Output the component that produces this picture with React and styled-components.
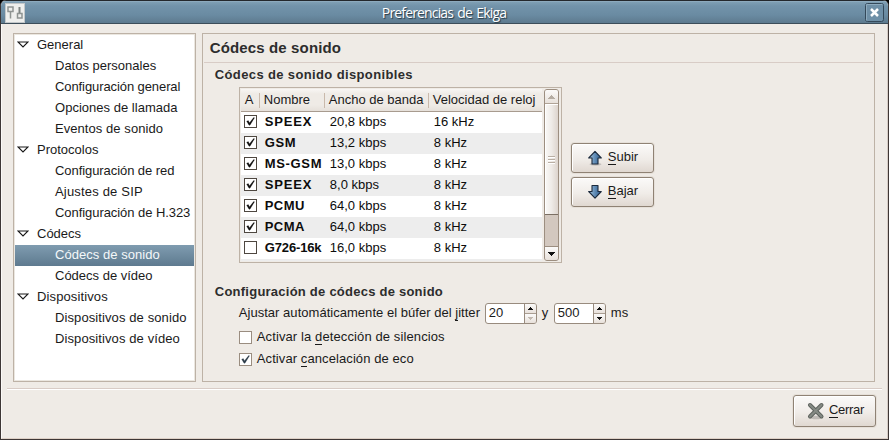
import React from "react";
import styled, { createGlobalStyle, css } from "styled-components";

const Global = createGlobalStyle`
  * { box-sizing: border-box; }
  html, body { margin: 0; padding: 0; background: #000; }
  body { font: 13px/19px "Liberation Sans", Arial, sans-serif; color: #1a1a1a; overflow: hidden; }
`;

const Window = styled.div`
  width: 889px;
  height: 440px;
  display: flex;
  flex-direction: column;
  background: #efebe6;
  border-radius: 6px 6px 0 0;
  overflow: hidden;
  border: 1px solid #3d3635;
  border-top: 0;
`;

const TitleBar = styled.header`
  height: 24px;
  flex: none;
  display: flex;
  align-items: flex-start;
  padding: 3px 3px 0 4px;
  border-top: 1px solid #24282c;
  border-bottom: 1px solid #3c4d59;
  background: linear-gradient(#9ab5c7 0, #7f9fb4 1px, #7293aa 5px, #6a8ba2 14px, #5d7a8e 22px);
`;

const TitleIcon = styled.svg`
  width: 20px;
  height: 20px;
  margin-top: -1px;
  flex: none;
`;

const WindowTitle = styled.h1`
  flex: 1;
  margin: 0;
  padding-right: 2px;
  text-align: center;
  font: 400 14px/17px "Open Sans", "Noto Sans", sans-serif;
  letter-spacing: -0.85px;
  word-spacing: 1.5px;
  color: #fff;
  text-shadow: 1px 1px 1px #263844;
`;

const CloseBox = styled.svg`
  width: 20px;
  height: 20px;
  margin-top: -1px;
  flex: none;
`;

const Body = styled.main`
  display: flex;
  gap: 6px;
  padding: 9px 12px 6px 11px;
  height: 364px;
  border-left: 1px solid #fbf9f7;
  border-right: 1px solid #d5cbc4;
`;

const Tree = styled.nav`
  width: 183px;
  height: 349px;
  border: 1px solid #bdb2a6;
  outline: 1px solid #ebe7e0;
  outline-offset: -2px;
  background: #fff;
  padding: 1px;
`;

const TreeRow = styled.div`
  height: 21px;
  display: flex;
  align-items: flex-start;
  white-space: nowrap;
  padding-left: ${(p) => (p.$group ? 2 : 40)}px;
  letter-spacing: ${(p) => p.$ls || 0}px;
  color: ${(p) => (p.$selected ? "#f4f8fa" : "#1a1a1a")};
  background: ${(p) => (p.$selected ? "linear-gradient(#7f9cb0, #5e7a8f)" : "transparent")};
`;

const Expander = styled.svg`
  width: 12px;
  height: 8px;
  margin: 6px 8px 0 0;
`;

const Panel = styled.section`
  width: 674px;
  height: 349px;
  border: 1px solid #bdb2a6;
  padding: 1px;
  color: #1a1a1a;
`;

const PanelTitle = styled.h2`
  margin: 0;
  height: 28px;
  padding-left: 6px;
  border-bottom: 1px solid #d8ccc6;
  font-size: 15px;
  line-height: 26px;
  letter-spacing: 0.13px;
  color: #2d2d2d;
`;

const SectionTitle = styled.h3`
  margin: 0;
  padding: ${(p) => p.$top}px 0 0 11px;
  height: ${(p) => p.$h}px;
  font-size: 13px;
  line-height: 22px;
  letter-spacing: ${(p) => p.$ls}px;
  color: #2d2d2d;
`;

const CodecArea = styled.div`
  display: flex;
  gap: 9px;
  margin-left: 35px;
`;

const ListFrame = styled.div`
  width: 323px;
  height: 176px;
  display: flex;
  justify-content: space-between;
  border: 1px solid #bdb2a6;
  padding: 1px;
`;

const Table = styled.div`
  width: 301px;
  height: 172px;
  overflow: hidden;
  background: #fff;
`;

const rowGrid = css`
  display: grid;
  grid-template-columns: 19px 65px 104px 113px;
  white-space: nowrap;
`;

const HeadRow = styled.div`
  ${rowGrid}
  height: 23px;
  background: linear-gradient(#f8f6f4, #efebe6 5px, #efebe6 16px, #e6e0da);
  border-bottom: 1px solid #a89b8f;
`;

const HeadCell = styled.div`
  padding-left: 4px;
  line-height: 22px;
  background: linear-gradient(#c9b9ab, #c9b9ab) 100% 4px / 1px 15px no-repeat;
  &:last-child { background: none; }
`;

const Row = styled.div`
  ${rowGrid}
  height: 21px;
  line-height: 19px;
  background: ${(p) => (p.$alt ? "#ededed" : "#fff")};
  color: #0c0c0c;
`;

const Cell = styled.div`
  padding-left: 5px;
  letter-spacing: ${(p) => p.$ls || 0}px;
  font-weight: ${(p) => (p.$bold ? 700 : 400)};
`;

const CheckSvg = styled.svg`
  width: 13px;
  height: 13px;
  flex: none;
  margin: ${(p) => p.$m};
  display: block;
`;

const Scrollbar = styled.div`
  width: 15px;
  height: 172px;
  display: flex;
  flex-direction: column;
  border: 1px solid #9c8e80;
  border-radius: 3px;
  background: #d3c8bf;
  overflow: hidden;
  margin-right: 1px;
`;

const Trough = styled.div`
  flex: 1;
  border-bottom: 1px solid #9c8e80;
`;

const Stepper = styled.div`
  height: ${(p) => p.$h}px;
  flex: none;
  display: flex;
  align-items: center;
  justify-content: center;
  background: linear-gradient(#fbfaf9, #e8e1db);
`;

const Thumb = styled.div`
  height: 112px;
  flex: none;
  display: flex;
  flex-direction: column;
  align-items: center;
  justify-content: center;
  gap: 2px;
  border-top: 1px solid #b0a396;
  border-bottom: 1px solid #7b6f63;
  box-shadow: inset 1px 1px #fff;
  background: linear-gradient(90deg, #faf9f7, #efebe7 50%, #ddd4cd);
`;

const Grip = styled.i`
  width: 7px;
  height: 1px;
  background: #b9aea3;
  box-shadow: 0 1px #fff;
`;

const ButtonColumn = styled.div`
  display: flex;
  flex-direction: column;
  gap: 4px;
  padding-top: 56px;
`;

const Button = styled.button`
  width: 83px;
  height: ${(p) => p.$h || 30}px;
  display: flex;
  align-items: center;
  gap: ${(p) => p.$gap || 5}px;
  padding: 0 0 0 ${(p) => p.$pl || 15}px;
  border: 1px solid #8f8274;
  border-radius: 3px;
  background: linear-gradient(#fbfaf9, #f0ece8 55%, #e0d8d1);
  box-shadow: inset 1px 1px #fff, 0 0 0 1px #e6e0d9;
  font: inherit;
  color: #1a1a1a;
`;

const ButtonText = styled.span`
  line-height: 18px;
  padding-bottom: ${(p) => p.$lift || 2}px;
  letter-spacing: ${(p) => p.$ls || 0}px;
`;

const Key = styled.span`
  border-bottom: 1px solid currentColor;
  display: inline-block;
  line-height: 14px;
`;

const Icon = styled.svg`
  width: ${(p) => p.$s}px;
  height: ${(p) => p.$s}px;
  flex: none;
`;

const JitterRow = styled.div`
  height: 21px;
  display: flex;
  margin: 0 0 3px 35px;
  white-space: nowrap;
`;

const Label = styled.span`
  width: ${(p) => (p.$w ? p.$w + "px" : "auto")};
  padding-left: ${(p) => p.$pl || 0}px;
  letter-spacing: ${(p) => p.$ls || 0}px;
  line-height: 19px;
`;

const Spin = styled.div`
  width: 52px;
  height: 21px;
  display: flex;
  border: 1px solid #988b7e;
  border-radius: 3px;
  background: #fff;
  overflow: hidden;
`;

const SpinValue = styled.span`
  flex: 1;
  padding-left: 3px;
  line-height: 18px;
`;

const SpinButtons = styled.div`
  width: 12px;
  display: grid;
  grid-template-rows: 9px 9px;
  gap: 1px;
  border-left: 1px solid #988b7e;
  background: #a99d91;
`;

const CheckRow = styled.label`
  height: 22px;
  display: flex;
  margin-left: 35px;
  white-space: nowrap;
`;

const Footer = styled.footer`
  flex: 1;
  display: flex;
  flex-direction: column;
  border-left: 1px solid #fbf9f7;
  border-right: 1px solid #d5cbc4;
  border-bottom: 1px solid #ddd0c6;
`;

const Rule = styled.hr`
  width: 875px;
  height: 2px;
  margin: 0 0 5px 5px;
  border: 0;
  border-top: 1px solid #d8ccc6;
  background: #fff;
`;

const FooterActions = styled.div`
  display: flex;
  justify-content: flex-end;
  padding-right: 11px;
`;

const Check = ({ on, m, frame = "#4e4740", mark = "#111" }) => (
  <CheckSvg viewBox="0 0 13 13" $m={m}>
    <rect x=".5" y=".5" width="12" height="12" fill="#fff" stroke={frame} />
    {on && <path d="M2.600 6.200 4.300 5.600 5.500 7.700 9.600 2.600 10.600 2.800 6 10.200 5 10.200Z" fill={mark} stroke={mark} strokeWidth=".2" />}
  </CheckSvg>
);

const Triangle = ({ up, color = "#111" }) => (
  <svg width="7" height="4" viewBox="0 0 7 4" shapeRendering="crispEdges">
    <path d={up ? "M3 0h1v1h1v1h1v1h1v1H0V3h1V2h1V1h1Z" : "M0 0h7v1H6v1H5v1H4v1H3V3H2V2H1V1H0Z"} fill={color} />
  </svg>
);

const SmallTriangle = ({ up, color = "#111" }) => (
  <svg width="5" height="3" viewBox="0 0 5 3" shapeRendering="crispEdges">
    <path d={up ? "M2 0h1v1h1v1h1v1H0V2h1V1h1Z" : "M0 0h5v1H4v1H3v1H2V2H1V1H0Z"} fill={color} />
  </svg>
);

const Arrow = ({ down }) => (
  <Icon $s={16} viewBox="0 0 16 16">
    <defs>
      <linearGradient id="arrowFill">
        <stop offset="0" stopColor="#a9c7e0" />
        <stop offset=".5" stopColor="#5f8bb5" />
        <stop offset="1" stopColor="#2f5a8a" />
      </linearGradient>
    </defs>
    {!down && <ellipse cx="8.500" cy="14.200" rx="6" ry="1.500" fill="#000" opacity=".16" />}
    <path
      d={down ? "M5 1.500H11V7.500H14.300L8 14.200 1.700 7.500H5Z" : "M8 1.300 14.300 8H11V14H5V8H1.700Z"}
      fill="url(#arrowFill)" stroke="#1c2a3c" strokeWidth="1.100" strokeLinejoin="round"
    />
  </Icon>
);

const tree = [
  { t: "General", group: true },
  { t: "Datos personales" },
  { t: "Configuración general", ls: -0.09 },
  { t: "Opciones de llamada", ls: 0.02 },
  { t: "Eventos de sonido", ls: 0.06 },
  { t: "Protocolos", group: true },
  { t: "Configuración de red", ls: -0.07 },
  { t: "Ajustes de SIP", ls: 0.18 },
  { t: "Configuración de H.323", ls: -0.06 },
  { t: "Códecs", group: true },
  { t: "Códecs de sonido", selected: true, ls: 0.04 },
  { t: "Códecs de vídeo" },
  { t: "Dispositivos", group: true, ls: 0.12 },
  { t: "Dispositivos de sonido", ls: 0.1 },
  { t: "Dispositivos de vídeo", ls: 0.1 },
];

const codecs = [
  ["SPEEX", "20,8 kbps", "16 kHz", 0.8],
  ["GSM", "13,2 kbps", "8 kHz", 0.6],
  ["MS-GSM", "13,0 kbps", "8 kHz", 0.65],
  ["SPEEX", "8,0 kbps", "8 kHz", 0.8],
  ["PCMU", "64,0 kbps", "8 kHz", 0.4],
  ["PCMA", "64,0 kbps", "8 kHz", 0.4],
  ["G726-16k", "16,0 kbps", "8 kHz", -0.15],
];

export default function App() {
  return (
    <>
      <Global />
      <Window>
        <TitleBar>
          <TitleIcon viewBox="0 0 20 20">
            <rect x=".5" y=".5" width="19" height="19" fill="#eeefed" stroke="#c3c8ca" />
            <path d="M3 4h5v4.500h-5zM5.500 9V15.500M12.500 10.500h4.500v4.500h-4.500z" fill="none" stroke="#8f9492" strokeWidth="1.500" />
            <path d="M14.500 4v6" stroke="#7f8583" strokeWidth="2" />
          </TitleIcon>
          <WindowTitle>Preferencias de Ekiga</WindowTitle>
          <CloseBox viewBox="0 0 20 20">
            <rect x=".5" y=".5" width="18" height="18" rx="2" fill="#6f90a7" stroke="#34495a" />
            <path d="M1.500 17.500V1.500h16" fill="none" stroke="#8eabbe" />
            <path d="M6 6l7 7M13 6l-7 7" stroke="#fff" strokeWidth="2.500" />
          </CloseBox>
        </TitleBar>
        <Body>
          <Tree>
            {tree.map((r) => (
              <TreeRow key={r.t} $group={r.group} $selected={r.selected} $ls={r.ls}>
                {r.group && (
                  <Expander viewBox="0 0 12 8">
                    <path d="M1 1H11L6 6Z" fill="#fff" stroke="#1a1a1a" strokeWidth="1.100" />
                  </Expander>
                )}
                {r.t}
              </TreeRow>
            ))}
          </Tree>
          <Panel>
            <PanelTitle>Códecs de sonido</PanelTitle>
            <SectionTitle $top={1} $h={24} $ls={0.37}>Códecs de sonido disponibles</SectionTitle>
            <CodecArea>
              <ListFrame>
                <Table>
                  <HeadRow>
                    <HeadCell>A</HeadCell>
                    <HeadCell>Nombre</HeadCell>
                    <HeadCell>Ancho de banda</HeadCell>
                    <HeadCell>Velocidad de reloj</HeadCell>
                  </HeadRow>
                  {codecs.map(([name, rate, clock, ls], i) => (
                    <Row key={i} $alt={i % 2 === 1}>
                      <Check on={i < 6} m="3px 0 0 3px" />
                      <Cell $bold $ls={ls}>{name}</Cell>
                      <Cell>{rate}</Cell>
                      <Cell>{clock}</Cell>
                    </Row>
                  ))}
                  <Row $alt />
                </Table>
                <Scrollbar>
                  <Stepper $h={13}><Triangle up color="#b5aca2" /></Stepper>
                  <Thumb><Grip /><Grip /><Grip /></Thumb>
                  <Trough />
                  <Stepper $h={13}><Triangle /></Stepper>
                </Scrollbar>
              </ListFrame>
              <ButtonColumn>
                <Button>
                  <Arrow />
                  <ButtonText><Key>S</Key>ubir</ButtonText>
                </Button>
                <Button>
                  <Arrow down />
                  <ButtonText><Key>B</Key>ajar</ButtonText>
                </Button>
              </ButtonColumn>
            </CodecArea>
            <SectionTitle $top={18} $h={40} $ls={0.24}>Configuración de códecs de sonido</SectionTitle>
            <JitterRow>
              <Label $w={246} $ls={0.03}>Ajustar automáticamente el búfer del <Key>j</Key>itter</Label>
              <Spin>
                <SpinValue>20</SpinValue>
                <SpinButtons>
                  <Stepper $h={9}><SmallTriangle up /></Stepper>
                  <Stepper $h={9}><SmallTriangle color="#c2b9b0" /></Stepper>
                </SpinButtons>
              </Spin>
              <Label $w={17} $pl={5}>y</Label>
              <Spin>
                <SpinValue>500</SpinValue>
                <SpinButtons>
                  <Stepper $h={9}><SmallTriangle up /></Stepper>
                  <Stepper $h={9}><SmallTriangle /></Stepper>
                </SpinButtons>
              </Spin>
              <Label $pl={5}>ms</Label>
            </JitterRow>
            <CheckRow>
              <Check m="4px 5px 0 0" frame="#9a8d80" />
              <Label $ls={0.11}>Activar la <Key>d</Key>etección de silencios</Label>
            </CheckRow>
            <CheckRow>
              <Check on m="4px 5px 0 0" frame="#9a8d80" mark="#2e3d4a" />
              <Label $ls={0.09}>Activar <Key>c</Key>ancelación de eco</Label>
            </CheckRow>
          </Panel>
        </Body>
        <Footer>
          <Rule />
          <FooterActions>
            <Button $h={32} $pl={13} $gap={4}>
              <Icon $s={18} viewBox="0 0 18 18">
                <ellipse cx="9" cy="15.500" rx="6.500" ry="1.800" fill="#000" opacity=".18" />
                <path d="M3 3l11.500 11.500M14.500 3L3 14.500" stroke="#5b605b" strokeWidth="4" strokeLinecap="round" />
                <path d="M3 3l11.500 11.500M14.500 3L3 14.500" stroke="#858a84" strokeWidth="2.200" strokeLinecap="round" />
              </Icon>
              <ButtonText $lift={3} $ls={-0.3}><Key>C</Key>errar</ButtonText>
            </Button>
          </FooterActions>
        </Footer>
      </Window>
    </>
  );
}
